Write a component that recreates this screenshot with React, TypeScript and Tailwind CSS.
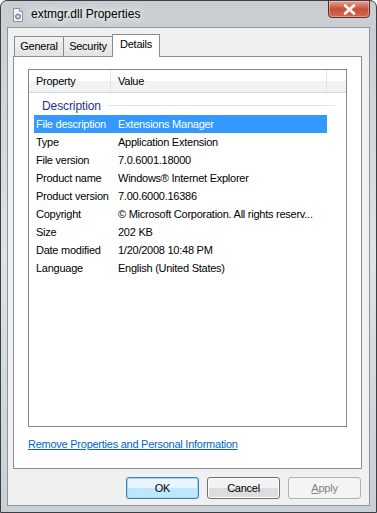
import React from "react";

const rows: [string, string][] = [
  ["File description", "Extensions Manager"],
  ["Type", "Application Extension"],
  ["File version", "7.0.6001.18000"],
  ["Product name", "Windows\u00AE Internet Explorer"],
  ["Product version", "7.00.6000.16386"],
  ["Copyright", "\u00A9 Microsoft Corporation. All rights reserv..."],
  ["Size", "202 KB"],
  ["Date modified", "1/20/2008 10:48 PM"],
  ["Language", "English (United States)"],
];

function FileIcon() {
  return (
    <svg width="12" height="14" viewBox="0 0 12 14">
      <path d="M1.5 0.5h6l3 3v10h-9z" fill="#f4f6f8" stroke="#8a949e" />
      <path d="M7.5 0.5v3h3" fill="#dfe4ea" stroke="#8a949e" />
      <circle cx="6" cy="8.5" r="2.6" fill="#9fb0c2" stroke="#5d6f82" strokeWidth="0.8" />
      <circle cx="6" cy="8.5" r="1" fill="#f4f6f8" />
    </svg>
  );
}

export default function App() {
  return (
    <div
      className="w-[377px] h-[513px] flex flex-col rounded-t-[7px] border border-[#3c4046] bg-gradient-to-b from-[#c9cdd1] via-[#dfe3e6] to-[#c9cfd3] overflow-hidden"
      style={{ fontFamily: '"Liberation Sans", Arial, sans-serif' }}
    >
      {/* Title bar */}
      <div className="h-[26px] flex items-start relative shrink-0">
        <div className="ml-[11px] mt-[7px]">
          <FileIcon />
        </div>
        <div className="ml-[7px] mt-[6px] text-[12px] text-black leading-[15px] [text-shadow:0_0_6px_#fff,0_0_10px_#fff]">
          extmgr.dll Properties
        </div>
        <div className="absolute right-[6px] top-[-1px] w-[42px] h-[18px] rounded-b-[4px] border border-[#5b2a22] bg-gradient-to-b from-[#e6a296] via-[#c6503a] to-[#d4694f] flex items-center justify-center shadow-[inset_0_0_0_1px_rgba(255,255,255,0.35)]">
          <svg width="13" height="11" viewBox="0 0 13 11">
            <path
              d="M2 1.5l9 8M11 1.5l-9 8"
              stroke="#fff"
              strokeWidth="2.6"
              strokeLinecap="round"
            />
            <path
              d="M2 1.5l9 8M11 1.5l-9 8"
              stroke="#f3f3f3"
              strokeWidth="1.4"
              strokeLinecap="round"
            />
          </svg>
        </div>
      </div>

      {/* Client area */}
      <div className="flex-1 mx-[6px] mb-[6px] border border-[#8d949b] bg-[#f0f0f0] flex flex-col pl-[5px] pr-[7px] pt-[5px] text-[11px] tracking-[-0.25px]">
        {/* Tabs */}
        <div className="flex items-end h-[23px] text-black">
          <div className="ml-[1px] h-[20px] w-[50px] flex items-center justify-center border border-b-0 border-[#898c95] bg-gradient-to-b from-[#f2f2f2] to-[#e3e3e3]">
            General
          </div>
          <div className="ml-[-1px] h-[20px] w-[50px] flex items-center justify-center border border-b-0 border-[#898c95] bg-gradient-to-b from-[#f2f2f2] to-[#e3e3e3]">
            Security
          </div>
          <div className="ml-[-1px] h-[23px] w-[48px] pb-[3px] flex items-center justify-center border border-b-0 border-[#898c95] bg-white relative z-10 mb-[-1px]">
            Details
          </div>
        </div>

        {/* Tab panel */}
        <div className="h-[413px] border border-[#898c95] bg-white flex flex-col px-[14px] pt-[12px]">
          {/* List view */}
          <div className="h-[358px] border border-[#828790] bg-white flex flex-col">
            <div className="h-[23px] flex text-black border-b border-[#d5d5d5] bg-gradient-to-b from-white from-50% to-[#f1f2f4] to-50% shrink-0">
              <div className="w-[82px] pl-[7px] flex items-center border-r border-[#e3e4e6]">
                Property
              </div>
              <div className="w-[216px] pl-[7px] flex items-center border-r border-[#e3e4e6]">
                Value
              </div>
              <div className="flex-1" />
            </div>

            <div className="flex items-center h-[17px] mt-[4px] pl-[13px] pr-[11px]">
              <span className="text-[12px] text-[#1e3287] tracking-[-0.1px]">Description</span>
              <div className="flex-1 h-px bg-[#e2e3e5] ml-[7px]" />
            </div>

            <div className="flex flex-col mt-[1px] pl-[5px]">
              {rows.map(([k, v], i) => (
                <div
                  key={k}
                  className={
                    i === 0
                      ? "w-[293px] h-[18px] flex items-center bg-[#3399ff] text-white"
                      : "w-[293px] h-[18px] flex items-center text-black"
                  }
                >
                  <div className="w-[84px] pl-[2px] whitespace-nowrap">{k}</div>
                  <div className="flex-1 whitespace-nowrap">{v}</div>
                </div>
              ))}
            </div>
          </div>

          <div className="mt-[10px] text-[#0066cc] underline leading-[14px]">
            Remove Properties and Personal Information
          </div>
        </div>

        {/* Buttons */}
        <div className="flex justify-end gap-[8px] mt-[8px] pr-[1px]">
          <div className="w-[73px] h-[22px] rounded-[3px] border border-[#3c7fb1] bg-gradient-to-b from-[#eaf6fd] from-50% to-[#bee6fd] to-50% flex items-center justify-center text-black shadow-[inset_0_0_0_1px_#9fd6f7]">
            OK
          </div>
          <div className="w-[73px] h-[22px] rounded-[3px] border border-[#707070] bg-gradient-to-b from-[#f2f2f2] from-50% to-[#dddddd] to-50% flex items-center justify-center text-black shadow-[inset_0_0_0_1px_#fcfcfc]">
            Cancel
          </div>
          <div className="w-[73px] h-[22px] rounded-[3px] border border-[#adb2b5] bg-[#f4f4f4] flex items-center justify-center text-[#838383]">
            <span>
              <span className="underline">A</span>pply
            </span>
          </div>
        </div>
      </div>
    </div>
  );
}
